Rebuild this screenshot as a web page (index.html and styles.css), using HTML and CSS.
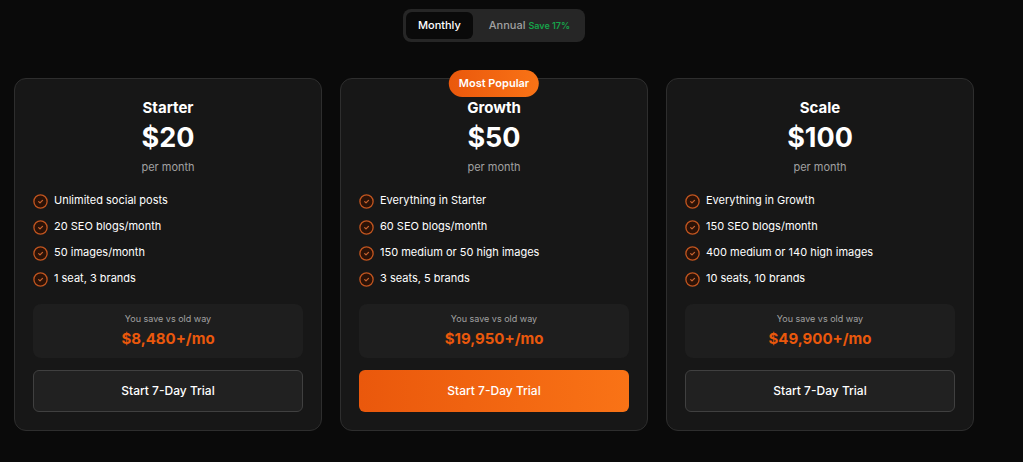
FILE: index.html
```html
<!DOCTYPE html>
<html lang="en">
<head>
<meta charset="utf-8">
<meta name="viewport" content="width=device-width, initial-scale=1">
<title>Pricing</title>
<link rel="stylesheet" href="styles.css">
</head>
<body>
<svg class="sprite" aria-hidden="true">
  <symbol id="check" viewBox="0 0 15 15">
    <circle cx="7.5" cy="7.5" r="6.6" fill="#2b1207" stroke="#c2551f" stroke-width="1.3"/>
    <path d="M5.7 7.6l1.3 1.3L9.5 6.4" fill="none" stroke="#c4622f" stroke-width="1.3" stroke-linecap="round" stroke-linejoin="round"/>
  </symbol>
</svg>
<main class="pricing">
  <div class="billing" role="group" aria-label="Billing period">
    <button class="billing-option active" type="button" aria-pressed="true">Monthly</button>
    <button class="billing-option" type="button" aria-pressed="false">Annual <span class="discount">Save 17%</span></button>
  </div>
  <div class="plans">
    <section class="plan">
      <h2 class="plan-name">Starter</h2>
      <p class="price">$20</p>
      <p class="period">per month</p>
      <ul class="features">
        <li class="feature"><svg class="check"><use href="#check"/></svg><span>Unlimited social posts</span></li>
        <li class="feature"><svg class="check"><use href="#check"/></svg><span>20 SEO blogs/month</span></li>
        <li class="feature"><svg class="check"><use href="#check"/></svg><span>50 images/month</span></li>
        <li class="feature"><svg class="check"><use href="#check"/></svg><span>1 seat, 3 brands</span></li>
      </ul>
      <div class="savings">
        <p class="savings-label">You save vs old way</p>
        <p class="savings-amount">$8,480+/mo</p>
      </div>
      <button class="trial" type="button">Start 7-Day Trial</button>
    </section>
    <section class="plan">
      <span class="badge">Most Popular</span>
      <h2 class="plan-name">Growth</h2>
      <p class="price">$50</p>
      <p class="period">per month</p>
      <ul class="features">
        <li class="feature"><svg class="check"><use href="#check"/></svg><span>Everything in Starter</span></li>
        <li class="feature"><svg class="check"><use href="#check"/></svg><span>60 SEO blogs/month</span></li>
        <li class="feature"><svg class="check"><use href="#check"/></svg><span>150 medium or 50 high images</span></li>
        <li class="feature"><svg class="check"><use href="#check"/></svg><span>3 seats, 5 brands</span></li>
      </ul>
      <div class="savings">
        <p class="savings-label">You save vs old way</p>
        <p class="savings-amount">$19,950+/mo</p>
      </div>
      <button class="trial primary" type="button">Start 7-Day Trial</button>
    </section>
    <section class="plan">
      <h2 class="plan-name">Scale</h2>
      <p class="price">$100</p>
      <p class="period">per month</p>
      <ul class="features">
        <li class="feature"><svg class="check"><use href="#check"/></svg><span>Everything in Growth</span></li>
        <li class="feature"><svg class="check"><use href="#check"/></svg><span>150 SEO blogs/month</span></li>
        <li class="feature"><svg class="check"><use href="#check"/></svg><span>400 medium or 140 high images</span></li>
        <li class="feature"><svg class="check"><use href="#check"/></svg><span>10 seats, 10 brands</span></li>
      </ul>
      <div class="savings">
        <p class="savings-label">You save vs old way</p>
        <p class="savings-amount">$49,900+/mo</p>
      </div>
      <button class="trial" type="button">Start 7-Day Trial</button>
    </section>
  </div>
</main>
</body>
</html>
```
FILE: styles.css
```css
* {
  box-sizing: border-box;
}

body {
  margin: 0;
  background: #0a0a0a;
  color: #fff;
  font-family: Inter, "Liberation Sans", sans-serif;
}

h2,
p,
ul {
  margin: 0;
  padding: 0;
}

button {
  margin: 0;
  font-family: inherit;
  cursor: pointer;
}

.sprite {
  display: none;
}

.pricing {
  display: flex;
  flex-direction: column;
  align-items: center;
  gap: 36px;
  padding: 9px 49px 31px 14px;
}

.billing {
  display: flex;
  gap: 4px;
  padding: 3px;
  border-radius: 8px;
  background: #262626;
}

.billing-option {
  padding: 0 12px;
  border: 0;
  border-radius: 6px;
  background: transparent;
  color: #a1a1a1;
  font-size: 11px;
  font-weight: 500;
  line-height: 27px;
}

.billing-option.active {
  background: #0a0a0a;
  color: #fff;
}

.discount {
  color: #16a34a;
  font-size: 9px;
  font-weight: 600;
}

.plans {
  display: grid;
  grid-template-columns: repeat(3, 1fr);
  gap: 18px;
  width: 100%;
}

.plan {
  position: relative;
  display: flex;
  flex-direction: column;
  padding: 18px;
  border: 1px solid #2e2e2e;
  border-radius: 12px;
  background: #171717;
  text-align: center;
}

.badge {
  position: absolute;
  top: -9px;
  left: 50%;
  transform: translateX(-50%);
  padding: 0 10px;
  border-radius: 14px;
  background: linear-gradient(90deg, #ea580c, #f97316);
  font-size: 11px;
  font-weight: 600;
  line-height: 27px;
  white-space: nowrap;
}

.plan-name {
  font-size: 15px;
  font-weight: 700;
  line-height: 21px;
}

.price {
  font-size: 27px;
  font-weight: 700;
  line-height: 40px;
}

.period {
  color: #a1a1a1;
  font-size: 11px;
  line-height: 18px;
}

.features {
  display: grid;
  gap: 9px;
  padding: 16px 0 17px;
  list-style: none;
  text-align: left;
}

.feature {
  display: flex;
  align-items: flex-start;
  gap: 6px;
  font-size: 11px;
  line-height: 17px;
}

.check {
  flex: none;
  width: 15px;
  height: 15px;
  margin-top: 2px;
}

.savings {
  display: grid;
  gap: 4px;
  margin-bottom: 12px;
  padding: 9px;
  border-radius: 8px;
  background: #1e1e1e;
}

.savings-label {
  color: #a1a1a1;
  font-size: 9px;
  line-height: 12px;
}

.savings-amount {
  color: #ea580c;
  font-size: 15px;
  font-weight: 700;
  line-height: 20px;
}

.trial {
  padding: 0;
  border: 1px solid #404040;
  border-radius: 6px;
  background: #212121;
  color: #fff;
  font-size: 12px;
  font-weight: 500;
  line-height: 40px;
}

.trial.primary {
  padding: 1px 0;
  border: 0;
  background: linear-gradient(90deg, #ea580c, #f97316);
}
```
